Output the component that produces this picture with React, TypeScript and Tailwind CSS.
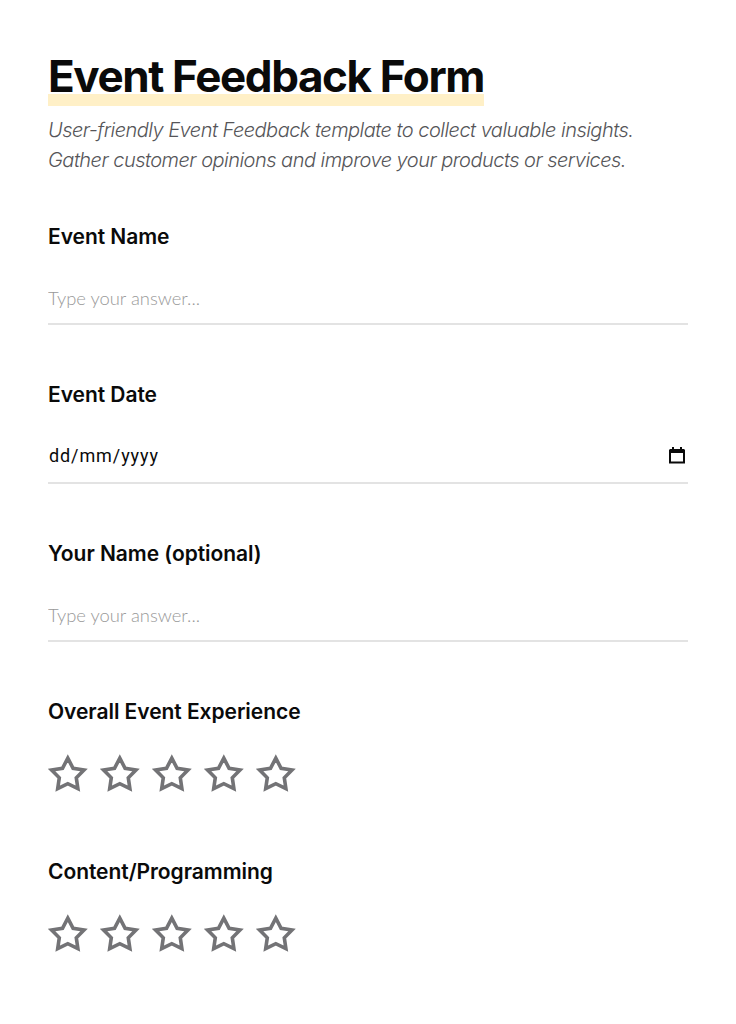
import React from "react";

const Star = () => (
  <svg width="40" height="40" viewBox="0 0 40 40" fill="none" stroke="#737376" strokeWidth="3.6" strokeLinejoin="miter" strokeMiterlimit="6">
    <path d="M19.8 4.2 L25.1 14.3 L36 16 L28.3 23.8 L29.9 34.6 L19.8 29.7 L9.7 34.6 L11.3 23.8 L3.6 16 L14.5 14.3 Z" />
  </svg>
);

const Stars = () => (
  <div className="flex gap-3 mt-[28px] pb-2">
    {[1, 2, 3, 4, 5].map((n) => (
      <Star key={n} />
    ))}
  </div>
);

const Label = ({ children }: { children: React.ReactNode }) => (
  <label className="block text-[21px] leading-[28px] font-semibold tracking-[-0.05px] text-[#0a0a0a]">{children}</label>
);

const TextField = ({ label }: { label: string }) => (
  <div>
    <Label>{label}</Label>
    <input
      type="text"
      placeholder="Type your answer..."
      className="mt-[22px] block w-full h-[52px] pb-px border-b-2 border-[#e3e3e3] text-[18.4px] font-['Lato',sans-serif] font-light outline-none placeholder:text-[#999999]"
    />
  </div>
);

export default function App() {
  return (
    <main className="min-h-screen bg-white px-12 pt-[48px] font-['Inter',sans-serif] overflow-hidden">
      <header>
        <h1 className="inline-block text-[44px] leading-[56px] font-bold tracking-[-1.4px] text-[#0a0a0a] bg-[linear-gradient(transparent_80%,#fff0c7_80%)] h-[58px]">
          Event Feedback Form
        </h1>
        <p className="mt-[9px] text-[20px] leading-[30px] italic font-light tracking-[-0.52px] text-[#555558]">
          User-friendly Event Feedback template to collect valuable insights.
          <br />
          Gather customer opinions and improve your products or services.
        </p>
      </header>

      <section className="mt-[48px] flex flex-col gap-[56px]">
        <TextField label="Event Name" />

        <div>
          <Label>Event Date</Label>
          <div className="mt-[21px] flex items-center justify-between h-[54px] pb-[2px] border-b-2 border-[#e3e3e3] pl-px pr-[3px]">
            <span className="text-[18px] font-['Roboto',sans-serif] text-[#0a0a0a] tracking-[0.9px]">dd/mm/yyyy</span>
            <svg width="16" height="18" viewBox="0 0 16 18" fill="none">
              <path d="M1 4.5h14v12H1z" stroke="#0a0a0a" strokeWidth="2" />
              <path d="M1 3h14v4H1z" fill="#0a0a0a" />
              <path d="M4 1v3M12 1v3" stroke="#0a0a0a" strokeWidth="2" />
            </svg>
          </div>
        </div>

        <TextField label="Your Name (optional)" />

        <div>
          <Label>Overall Event Experience</Label>
          <Stars />
        </div>

        <div>
          <Label>Content/Programming</Label>
          <Stars />
        </div>
      </section>
    </main>
  );
}
